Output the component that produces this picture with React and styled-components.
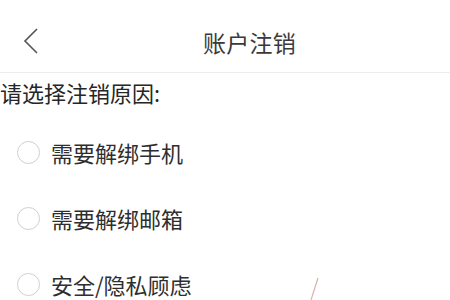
import React from 'react';
import styled, { createGlobalStyle } from 'styled-components';

const GlobalStyle = createGlobalStyle`
  html, body {
    margin: 0;
    padding: 0;
    background: #fff;
  }
  body {
    font-family: "Noto Sans CJK SC", "Noto Sans", sans-serif;
    color: #333;
  }
`;

const Page = styled('div')`
  position: relative;
  width: 450px;
  height: 300px;
  overflow: hidden;
  background: #fff;
`;

const Header = styled('div')`
  position: relative;
  height: 60px;
  padding: 12px 0 0 49px;
  display: flex;
  align-items: center;
  justify-content: center;
  border-bottom: 1px solid #ececec;
`;

const BackButton = styled('div')`
  position: absolute;
  left: 22px;
  top: 27px;
  width: 18px;
  height: 28px;
  display: flex;
`;

const Title = styled('div')`
  font-size: 23px;
  line-height: 30px;
  color: #3a3a3a;
  letter-spacing: 0.2px;
`;

const Prompt = styled('div')`
  padding: 4px 0 0 0;
  font-size: 22px;
  line-height: 30px;
  color: #262626;
`;

const List = styled('div')`
  margin-top: 12px;
  display: flex;
  flex-direction: column;
`;

const Option = styled('div')`
  height: 66px;
  display: flex;
  align-items: center;
  padding-left: 17px;
  gap: 11px;
`;

const Radio = styled('span')`
  box-sizing: border-box;
  width: 23px;
  height: 23px;
  border-radius: 50%;
  border: 1.5px solid ${(p) => (p.checked ? '#e4393c' : '#cfcfcf')};
  flex-shrink: 0;
`;

const Label = styled('span')`
  font-size: 22px;
  line-height: 30px;
  color: #2e2e2e;
`;

const Mark = styled('svg')`
  position: absolute;
  left: 300px;
  top: 276px;
`;

const reasons = ['需要解绑手机', '需要解绑邮箱', '安全/隐私顾虑'];

export default function App() {
  return (
    <Page>
      <GlobalStyle />
      <Header>
        <BackButton>
          <svg width="18" height="28" viewBox="0 0 18 28">
            <path d="M15 2 L3 14 L15 26" fill="none" stroke="#555" strokeWidth="1.6" />
          </svg>
        </BackButton>
        <Title>账户注销</Title>
      </Header>
      <Prompt>请选择注销原因:</Prompt>
      <List>
        {reasons.map((r) => (
          <Option key={r}>
            <Radio />
            <Label>{r}</Label>
          </Option>
        ))}
      </List>
      <Mark width="30" height="24" viewBox="0 0 30 24">
        <path d="M18 2 L11 24" stroke="#c8908a" strokeWidth="1.2" fill="none" opacity="0.7" />
      </Mark>
    </Page>
  );
}
